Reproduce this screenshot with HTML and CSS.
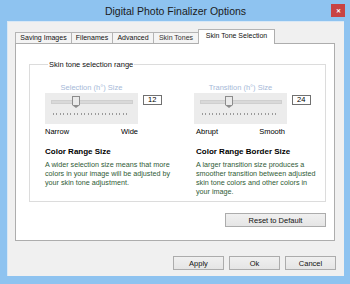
FILE: index.html
```html
<!DOCTYPE html>
<html lang="en">
<head>
    <meta charset="UTF-8">
    <meta name="viewport" content="width=device-width, initial-scale=1.0">
    <title>Digital Photo Finalizer Options</title>
    <link rel="stylesheet" href="styles.css">
</head>
<body>
<div class="window">
    <div class="titlebar">
        <span></span>
        <span class="title">Digital Photo Finalizer Options</span>
        <span class="close">&#x2715;</span>
    </div>
    <div class="client">
        <div class="tabs">
            <div class="tab">Saving Images</div>
            <div class="tab">Filenames</div>
            <div class="tab">Advanced</div>
            <div class="tab">Skin Tones</div>
            <div class="tab active">Skin Tone Selection</div>
        </div>
        <div class="page">
            <fieldset class="group">
                <legend>Skin tone selection range</legend>
                <div class="cols">
                    <div class="col">
                        <div class="slider-row">
                            <div class="slider">
                                <div class="slider-label">Selection (h°) Size</div>
                                <div class="track"><span class="thumb thumb-12"></span></div>
                                <div class="ticks"></div>
                            </div>
                            <div class="num">12</div>
                        </div>
                        <div class="ends"><span>Narrow</span><span>Wide</span></div>
                        <h3>Color Range Size</h3>
                        <p>A wider selection size means that more<br>colors in your image will be adjusted by<br>your skin tone adjustment.</p>
                    </div>
                    <div class="col">
                        <div class="slider-row">
                            <div class="slider">
                                <div class="slider-label">Transition (h°) Size</div>
                                <div class="track"><span class="thumb thumb-24"></span></div>
                                <div class="ticks"></div>
                            </div>
                            <div class="num">24</div>
                        </div>
                        <div class="ends"><span>Abrupt</span><span>Smooth</span></div>
                        <h3>Color Range Border Size</h3>
                        <p>A larger transition size produces a<br>smoother transition between adjusted<br>skin tone colors and other colors in<br>your image.</p>
                    </div>
                </div>
            </fieldset>
            <div class="reset-row"><button class="btn btn-reset">Reset to Default</button></div>
        </div>
        <div class="footer">
            <button class="btn">Apply</button>
            <button class="btn">Ok</button>
            <button class="btn">Cancel</button>
        </div>
    </div>
</div>
</body>
</html>
```

FILE: styles.css
```css
html, body {margin: 0; padding: 0;}
body {width: 350px; height: 284px; overflow: hidden; font-family: "Liberation Sans", Arial, sans-serif; color: #000;}

.window {width: 350px; height: 284px; box-sizing: border-box; background: #8ec3f0; padding: 0 6px 8px 7px; display: flex; flex-direction: column;}
.titlebar {height: 21px; display: grid; grid-template-columns: 1fr auto 1fr; align-items: center;}
.title {font-size: 10.5px; color: #1b1b1b; padding-top: 1px;}
.close {justify-self: end; align-self: start; margin-top: 4px; margin-right: -1px; width: 14px; height: 13px; background: #c84343; color: #fff; font-size: 6px; font-weight: bold; display: flex; align-items: center; justify-content: center;}

.client {flex: 1; background: #f0f0f0; box-shadow: inset 1px 1px 0 #d8e8f6; padding: 8px 9px 0 8px; display: flex; flex-direction: column;}

.tabs {display: flex; height: 14px; align-items: flex-end; position: relative; z-index: 1;}
.tab {height: 11px; box-sizing: border-box; border: 1px solid #b4b4b4; border-bottom: 0; border-right: 0; background: #f4f4f4; font-size: 7px; line-height: 10px; padding: 0; text-align: center; white-space: nowrap; color: #111;}
.tab:nth-child(1) {width: 56px;}
.tab:nth-child(2) {width: 41px;}
.tab:nth-child(3) {width: 41px;}
.tab:nth-child(4) {width: 45px; color: #333;}
.tab.active {width: 77px; height: 15px; margin-bottom: -1px; background: #fff; border-right: 1px solid #adadad; line-height: 12px;}

.page {height: 198px; box-sizing: border-box; background: #fff; border: 1px solid #adadad; padding: 16px 8px 0 13px;}

.group {margin: 0; padding: 0 0 0 15px; height: 142px; box-sizing: border-box; width: 297px; border: 1px solid #dcdcdc; border-radius: 0;}
.group legend {font-size: 7.5px; padding: 0 1px; margin-left: 3px; color: #111;}

.cols {display: flex; margin-top: 14px;}
.col {width: 149px;}
.col:last-child {width: 128px;}

.slider-row {display: flex; align-items: flex-start;}
.slider {width: 93px;}
.slider-label {font-size: 7.5px; color: #a6b9d8; text-align: center; height: 10px; line-height: 10px;}
.track {height: 18px; background: #ececec; position: relative;}
.track::before {content: ""; position: absolute; left: 6px; right: 5px; top: 7px; height: 2px; background: #d9d9d9; border: 1px solid #cfcfcf;}
.thumb {position: absolute; top: 3px; width: 6px; height: 8px; background: #eaeaea; border: 1px solid #8c8c8c; border-bottom: 0;}
.thumb::after {content: ""; position: absolute; left: -1px; top: 8px; width: 0; height: 0; border-left: 4px solid transparent; border-right: 4px solid transparent; border-top: 3px solid #8c8c8c;}
.thumb-12 {left: 27px;}
.thumb-24 {left: 31px;}
.ticks {height: 13px; background: #ececec; position: relative;}
.ticks::before {content: ""; position: absolute; left: 8px; right: 8px; top: 2px; height: 2px; background: repeating-linear-gradient(90deg, #9a9a9a 0 1px, transparent 1px 3.5px);}

.num {margin: 12px 0 0 5px; width: 19px; height: 10px; box-sizing: border-box; border: 1px solid #707070; font-size: 7.5px; line-height: 8px; padding-left: 4px; background: #fff;}

.ends {width: 93px; display: flex; justify-content: space-between; font-size: 7.5px; margin-top: 3px; height: 10px; line-height: 10px;}
.col:last-child .ends {width: 89px; padding-left: 2px;}

h3 {margin: 10px 0 3px 0; font-size: 8px; font-weight: bold; line-height: 10px;}
.col:last-child h3 {margin-left: 2px;}
p {margin: 0; font-size: 7.2px; line-height: 9px; white-space: nowrap; color: #2f5b36;}
.col:last-child p {margin-left: 2px;}

.reset-row {display: flex; justify-content: flex-end; width: 297px; margin-top: 11px;}

.btn {font-family: "Liberation Sans", Arial, sans-serif; font-size: 7.5px; color: #111; height: 14px; width: 51px; padding: 0; border: 1px solid #acacac; background: linear-gradient(#f0f0f0, #e5e5e5); border-radius: 0;}
.btn-reset {width: 101px;}

.footer {display: flex; justify-content: flex-end; gap: 5px; margin-top: 15px; margin-right: -1px;}
```
